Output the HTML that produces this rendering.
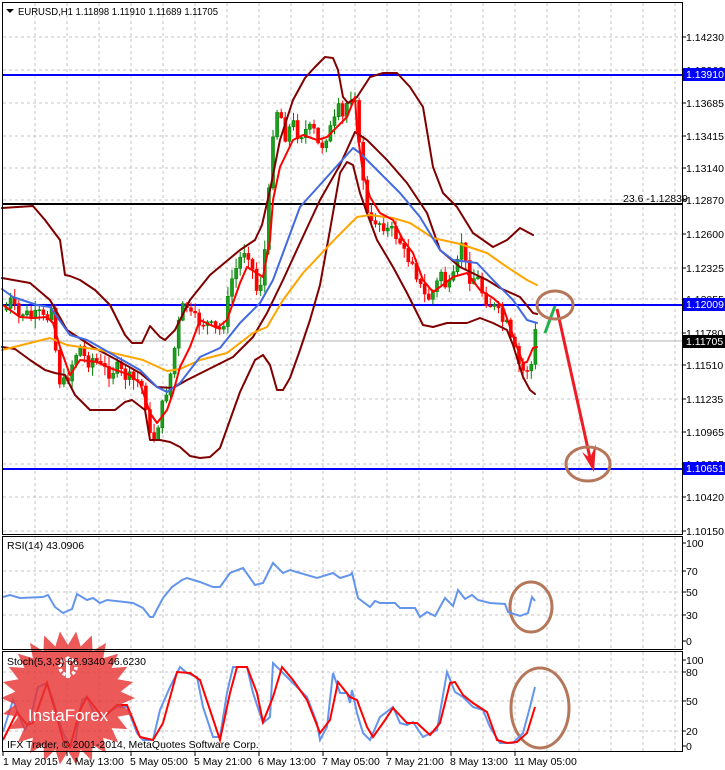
<!DOCTYPE html>
<html><head><meta charset="utf-8"><style>
html,body{margin:0;padding:0;background:#fff;width:725px;height:770px;overflow:hidden}
svg{display:block}
text{font-family:"Liberation Sans",sans-serif;font-size:10.5px;fill:#000}
</style></head><body>
<svg id="s" width="725" height="770" viewBox="0 0 725 770" xmlns="http://www.w3.org/2000/svg">
<rect width="725" height="770" fill="#fff"/>
<g id="grid" stroke="#c4c4c4" stroke-width="1" stroke-dasharray="3,3" fill="none"></g>
<line x1="3" y1="341" x2="682" y2="341" stroke="#b4b4b4" stroke-width="1"/>
<line x1="3" y1="75" x2="682" y2="75" stroke="#0000ff" stroke-width="2"/>
<line x1="3" y1="305" x2="682" y2="305" stroke="#0000ff" stroke-width="2"/>
<line x1="3" y1="469" x2="682" y2="469" stroke="#0000ff" stroke-width="2"/>
<line x1="3" y1="204" x2="682" y2="204" stroke="#000" stroke-width="2"/>
<g id="candles"></g>
<g fill="none" stroke-linejoin="round" stroke-linecap="round">
<polyline stroke="#800000" stroke-width="2" points="2,208 33,206 45,220 60,240 65,275 70,276 80,280 95,290 110,305 125,335 132,343 142,343 150,326 160,337 165,340 175,330 190,300 210,275 240,250 255,240 262,225 270,190 280,140 293,100 305,78 315,67 325,57 333,58 338,70 343,97 348,103 357,97 370,77 383,73 397,73 410,87 423,107 433,167 443,193 457,207 473,233 493,247 507,240 520,228 533,235"/>
<polyline stroke="#800000" stroke-width="2" points="2,278 30,283 50,300 67,330 93,347 117,360 140,373 157,387 173,388 187,380 213,367 233,357 253,337 267,313 283,280 300,243 320,200 340,165 355,132 367,140 387,160 407,183 427,213 440,250 460,267 487,280 500,288 520,297 533,313 537,314"/>
<polyline stroke="#800000" stroke-width="2" points="2,347 15,349 30,360 45,370 55,373 65,375 75,395 90,410 100,410 115,410 125,402 132,400 145,410 150,440 160,440 170,442 180,447 190,456 200,458 210,457 220,448 230,420 240,392 255,360 263,355 270,365 277,390 283,390 290,378 300,350 310,320 320,285 330,230 340,173 347,162 353,165 360,193 367,213 377,240 393,267 407,293 423,325 433,327 447,323 467,323 480,318 493,323 507,330 513,345 523,377 530,390 535,394"/>
<polyline stroke="#ffa500" stroke-width="2" points="2,350 50,338 67,345 100,350 143,360 167,371 180,369 200,360 227,353 253,333 267,327 283,300 303,273 337,237 357,217 370,215 393,218 410,223 433,238 460,244 487,253 507,267 527,280 537,285"/>
<polyline stroke="#4169e1" stroke-width="2" points="2,289 13,297 37,305 50,307 70,335 87,340 110,353 140,370 157,387 167,392 180,383 200,357 220,348 240,323 260,303 273,280 300,207 327,177 353,148 360,153 380,173 400,193 420,217 440,250 453,260 477,263 493,280 513,300 527,320 537,323"/>
<polyline stroke="#ff0000" stroke-width="2" points="3,305 20,317 33,318 47,317 53,323 60,347 70,375 80,360 97,362 110,368 130,375 140,383 150,413 157,423 167,410 173,393 180,367 190,347 200,320 217,328 227,320 240,283 247,267 263,277 270,240 273,200 280,167 293,140 303,135 317,140 327,137 347,117 355,97 357,130 363,173 370,197 380,213 393,220 403,240 413,253 423,280 433,292 440,287 453,277 467,273 480,290 493,298 503,307 510,327 517,347 523,363 527,362 533,348 537,347"/>
</g>
<line x1="545" y1="333" x2="555" y2="306" stroke="#22b24c" stroke-width="3"/>
<line x1="557" y1="309" x2="590" y2="458" stroke="#ee1c24" stroke-width="3"/>
<polygon points="594,472 582,452 590,458 596,444" fill="#ee1c24"/>
<g fill="none" stroke="#b5775a" stroke-width="3">
<ellipse cx="555" cy="305" rx="18" ry="14"/>
<ellipse cx="588" cy="464" rx="22" ry="17"/>
<ellipse cx="531" cy="607" rx="21" ry="25"/>
<ellipse cx="540" cy="708" rx="29" ry="40"/>
</g>
<polyline fill="none" stroke="#6495ed" stroke-width="2" points="3,597 10,595 20,598 43,597 48,595 55,607 63,613 72,609 77,594 87,600 93,598 100,603 107,600 133,603 143,608 150,617 153,617 163,598 172,587 182,580 187,578 200,582 213,587 220,587 230,573 243,568 255,585 263,583 273,563 283,573 290,570 317,578 333,573 340,578 350,575 352,573 358,598 370,607 375,601 380,603 395,603 400,608 415,608 420,617 427,612 435,616 445,598 453,606 458,590 465,599 472,595 478,600 490,603 505,604 508,612 520,616 528,613 532,597 535,601"/>
<polyline fill="none" stroke="#6495ed" stroke-width="2" points="3,732 13,700 18,713 25,730 30,720 38,687 47,683 53,700 63,733 70,747 75,743 82,700 87,697 97,720 107,713 117,707 127,707 137,733 143,740 153,740 160,710 170,687 180,667 187,673 197,677 203,707 213,737 220,737 227,693 233,667 247,667 253,693 263,723 270,717 273,663 280,670 293,683 307,697 317,723 320,740 327,727 333,673 340,693 347,693 350,703 352,690 357,713 363,733 370,740 380,717 393,707 400,723 407,725 413,722 423,737 437,730 447,672 455,692 463,697 473,707 483,710 490,727 500,743 513,743 523,733 530,707 535,687"/>
<polyline fill="none" stroke="#ff0000" stroke-width="2" points="3,740 17,712 27,725 33,723 47,683 55,710 63,740 70,747 80,710 87,697 103,718 117,705 127,705 140,737 153,740 163,723 177,672 190,673 200,680 210,710 220,740 230,693 237,667 247,667 257,693 263,722 273,697 282,667 293,680 307,700 320,733 330,720 338,682 350,697 357,700 367,727 373,737 383,723 393,708 407,723 417,723 430,735 440,723 450,683 455,682 463,695 473,703 487,712 497,740 507,743 517,742 527,733 535,707"/>
<g opacity="0.82">
<polygon id="star" fill="#e83434"/>
</g>
<g fill="#fff">
<circle cx="68" cy="667" r="8" fill="none" stroke="#fff" stroke-width="3.5" stroke-dasharray="3,2"/>
<rect x="66" y="662" width="4" height="16"/>
<circle cx="68" cy="659" r="2.5"/>
</g>
<text x="68" y="721" text-anchor="middle" style="font-size:17px;fill:#fff">InstaForex</text>
<g fill="none" stroke="#000" stroke-width="1">
<rect x="2.5" y="2.5" width="680" height="532"/>
<rect x="2.5" y="536.5" width="680" height="113"/>
<rect x="2.5" y="651.5" width="680" height="100"/>
</g>
<polygon points="6,9 14,9 10,13" fill="#000"/>
<text x="18" y="15" textLength="200" lengthAdjust="spacingAndGlyphs">EURUSD,H1  1.11898 1.11910 1.11689 1.11705</text>
<text x="7" y="549">RSI(14) 43.0906</text>
<text x="7" y="665">Stoch(5,3,3) 66.9340 46.6230</text>
<text x="7" y="748">IFX Trader, © 2001-2014, MetaQuotes Software Corp.</text>
<text x="623" y="202">23.6 -1.12839</text>
<g id="axis"></g>
<rect x="683" y="68" width="42" height="13" fill="#0000ff"/>
<text x="686" y="78" style="fill:#fff">1.13910</text>
<rect x="683" y="298" width="42" height="13" fill="#0000ff"/>
<text x="686" y="308" style="fill:#fff">1.12009</text>
<rect x="683" y="335" width="42" height="13" fill="#000"/>
<text x="686" y="345" style="fill:#fff">1.11705</text>
<rect x="683" y="462" width="42" height="13" fill="#0000ff"/>
<text x="686" y="472" style="fill:#fff">1.10651</text>
<g>
<text x="3" y="765">1 May 2015</text>
<text x="66" y="765">4 May 13:00</text>
<text x="130" y="765">5 May 05:00</text>
<text x="194" y="765">5 May 21:00</text>
<text x="258" y="765">6 May 13:00</text>
<text x="322" y="765">7 May 05:00</text>
<text x="386" y="765">7 May 21:00</text>
<text x="450" y="765">8 May 13:00</text>
<text x="514" y="765">11 May 05:00</text>
</g>
</svg>
<script>
(function(){
var NS="http://www.w3.org/2000/svg";
function el(t,a,p){var e=document.createElementNS(NS,t);for(var k in a)e.setAttribute(k,a[k]);p.appendChild(e);return e;}
var g=document.getElementById('grid');
var hy=[37,70,103,136,168,200,234,268,299,333,365,399,432,464,497,531,571,592,615,672,701,731];
hy.forEach(function(y){el('line',{x1:3,y1:y,x2:682,y2:y},g);});
for(var x=35;x<682;x+=32){
 el('line',{x1:x,y1:3,x2:x,y2:535},g);
 el('line',{x1:x,y1:537,x2:x,y2:650},g);
 el('line',{x1:x,y1:652,x2:x,y2:752},g);
}
var ax=document.getElementById('axis');
var labs=[[37,'1.14230'],[70,'1.13960'],[103,'1.13685'],[136,'1.13415'],[168,'1.13140'],[200,'1.12870'],[234,'1.12600'],[268,'1.12325'],[299,'1.12055'],[333,'1.11780'],[365,'1.11510'],[399,'1.11235'],[432,'1.10965'],[464,'1.10695'],[497,'1.10420'],[531,'1.10150'],[543,'100'],[571,'70'],[592,'50'],[615,'30'],[641,'0'],[660,'100'],[672,'80'],[701,'50'],[731,'20'],[746,'0']];
labs.forEach(function(l){el('line',{x1:682,y1:l[0],x2:686,y2:l[0],stroke:'#000'},ax);var t=el('text',{x:686,y:l[0]+4},ax);t.textContent=l[1];});
[3,67,131,195,259,323,387,451,515].forEach(function(x){el('line',{x1:x,y1:752,x2:x,y2:756,stroke:'#000'},ax);});
var pts=[],n=26,cx=68,cy=698;
for(var i=0;i<n*2;i++){var r=i%2?53:67;var a=Math.PI*i/n;pts.push((cx+r*Math.cos(a)).toFixed(1)+','+(cy+r*Math.sin(a)).toFixed(1));}
document.getElementById('star').setAttribute('points',pts.join(' '));
var K=[[4,310],[10,300],[16,318],[22,312],[30,318],[38,315],[45,322],[50,300],[53,340],[58,380],[64,385],[68,370],[72,360],[78,345],[85,362],[92,358],[100,368],[108,372],[115,368],[122,375],[130,380],[137,382],[143,390],[147,430],[150,445],[155,430],[160,410],[165,390],[170,370],[175,335],[180,310],[185,305],[190,318],[198,322],[205,323],[213,330],[220,330],[225,310],[230,280],[235,268],[240,255],[245,245],[250,265],[255,290],[260,280],[265,235],[270,150],[273,110],[278,110],[285,140],[290,120],[297,135],[305,130],[312,130],[318,150],[325,135],[332,125],[337,110],[342,120],[346,100],[350,95],[353,85],[356,140],[360,160],[364,200],[368,235],[372,215],[376,225],[380,220],[385,230],[392,232],[398,240],[405,260],[410,255],[418,285],[425,300],[430,295],[435,285],[440,270],[445,290],[450,285],[456,265],[460,240],[465,270],[470,280],[475,275],[480,290],[485,300],[490,305],[495,310],[500,320],[505,325],[510,345],[515,355],[520,375],[524,365],[528,373],[532,355],[535,320]];
function f(x){for(var i=1;i<K.length;i++){if(x<=K[i][0]){var a=K[i-1],b=K[i];return a[1]+(b[1]-a[1])*(x-a[0])/(b[0]-a[0]);}}return K[K.length-1][1];}
var cg=document.getElementById('candles');var seed=7;function rnd(){seed=(seed*9301+49297)%233280;return seed/233280;}
var prev=f(4);
for(var x=5;x<=535;x+=4.1){
 var c=f(x)+(rnd()-0.5)*14;var o=prev;prev=c;
 var up=c<o;var top=Math.min(o,c),bot=Math.max(o,c);if(bot-top<1)bot=top+1;
 var col=up?'#008000':'#ff0000';
 var hi=top-rnd()*9-1,lo=bot+rnd()*9+1;
 el('line',{x1:x+1.5,y1:hi,x2:x+1.5,y2:lo,stroke:col,'stroke-width':1},cg);
 el('rect',{x:x,y:top,width:3,height:bot-top,fill:up?'#1e9e1e':'#ff0000',stroke:col,'stroke-width':0.6},cg);
}
})();
</script>
</body></html>
